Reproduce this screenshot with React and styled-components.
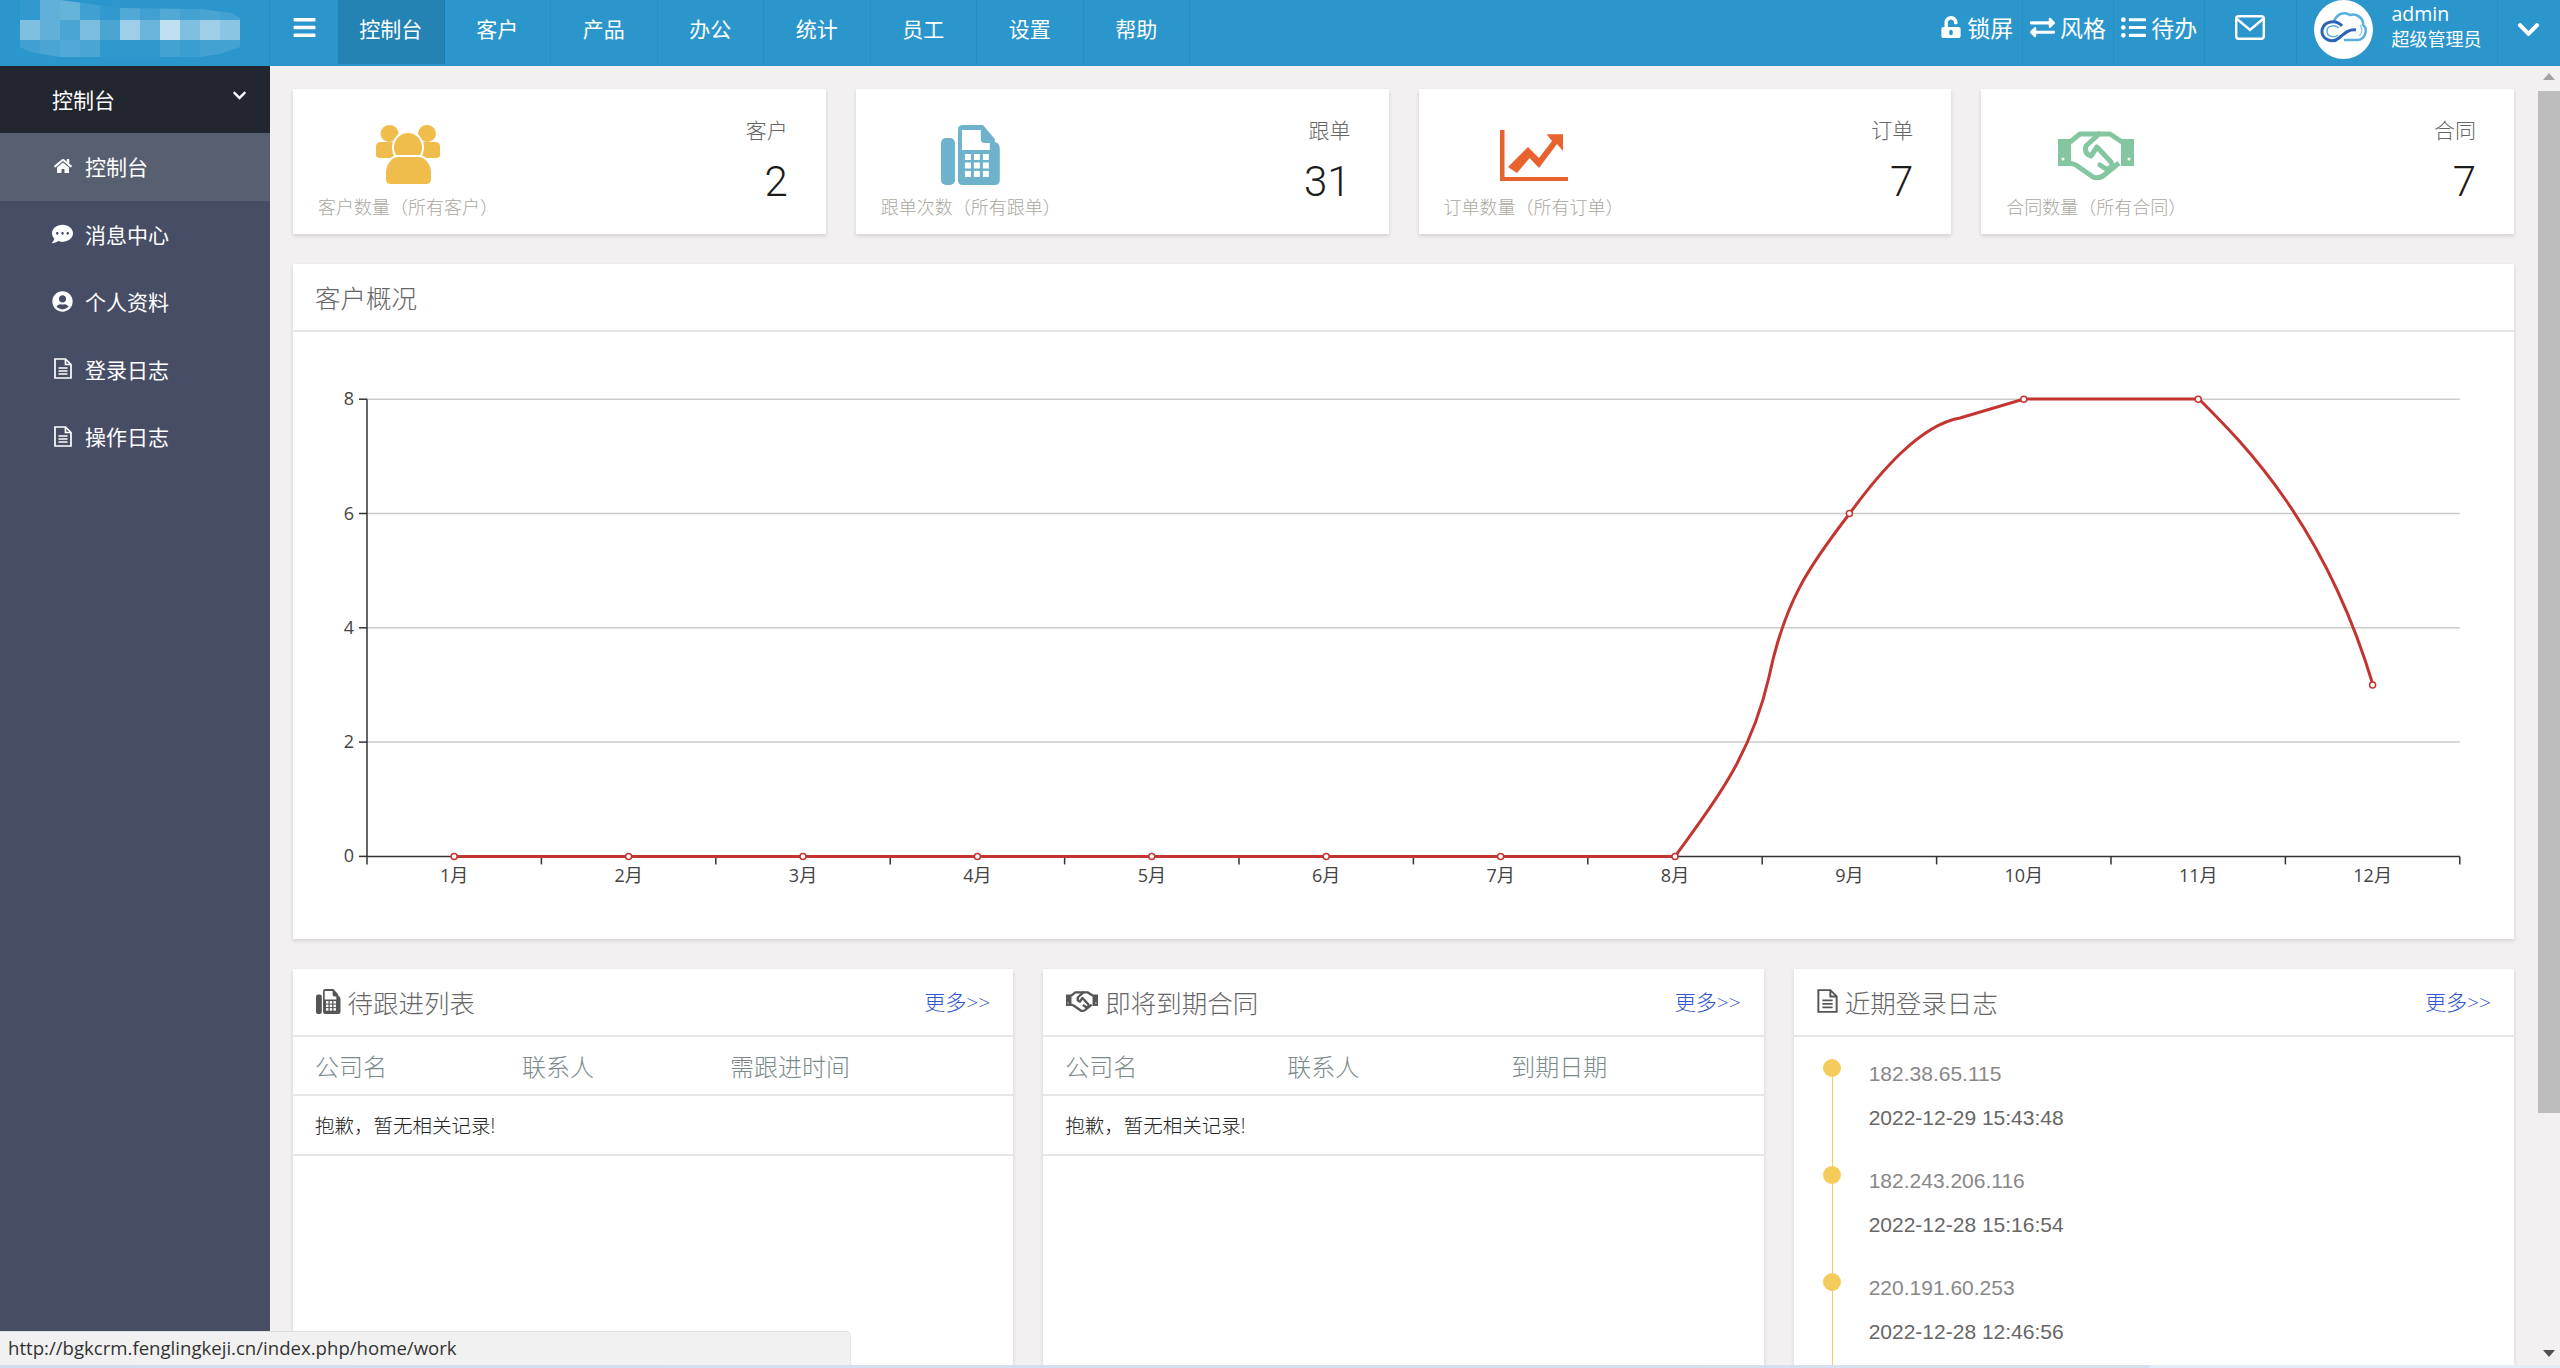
import React from 'react';
import styled, { createGlobalStyle } from 'styled-components';
import {
  FaBars,
  FaChevronDown,
  FaCommentDots,
  FaExchangeAlt,
  FaHome,
  FaListUl,
  FaUnlockAlt,
  FaUserCircle,
} from 'react-icons/fa';

const NAV = ['控制台', '客户', '产品', '办公', '统计', '员工', '设置', '帮助'];

const MOSAIC = [
  [0.03, 0.25, 0.28, 0.1, 0.03, 0.18, 0.1, 0.18, 0.12, 0.15, 0.12],
  [0.4, 0.25, 0.15, 0.38, 0.15, 0.55, 0.3, 0.7, 0.4, 0.55, 0.45],
  [0.1, 0.15, 0.18, 0.15, 0.02, 0.02, 0.02, 0.12, 0.08, 0.12, 0.12],
];

const LOGS = [
  { ip: '182.38.65.115', time: '2022-12-29 15:43:48' },
  { ip: '182.243.206.116', time: '2022-12-28 15:16:54' },
  { ip: '220.191.60.253', time: '2022-12-28 12:46:56' },
];

const X0 = 367;
const STEP = 174.4;
const Y0 = 856.4;
const YSTEP = 57.15;
const DATA = [0, 0, 0, 0, 0, 0, 0, 0, 6, 8, 8, 3];

// 折线路径，坐标和整页一致
const CURVE =
  'M1675 856.4 C1710 808 1750 760 1769 677 C1785 600 1810 565 1850 513 ' +
  'C1880 472 1920 425 1960 418 L2024 399 H2199 C2245 445 2325 525 2373 685';

function LogoMosaic() {
  return (
    <svg width="270" height="66" viewBox="0 0 270 66">
      <clipPath id="logo-clip">
        <path d="M20 0H60L120 8L200 9L232 13L240 18V47L220 54L200 57H60L30 52L20 47Z" />
      </clipPath>
      <g clipPath="url(#logo-clip)">
        {MOSAIC.map((row, r) =>
          row.map((o, c) => (
            <rect key={`${r}-${c}`} x={20 + c * 20} y={r * 20} width="20" height="20" fill="#fff" opacity={o} />
          ))
        )}
      </g>
    </svg>
  );
}

function CloudLogo() {
  return (
    <svg width="59" height="59" viewBox="0 0 59 59">
      <circle cx="29.5" cy="29.5" r="29.5" fill="#fff" />
      <path d="M20 22C22 14 30 11 36 15C42 13 50 18 49 25C54 28 52 39 44 40H30" fill="none" stroke="#57afe0" strokeWidth="2.5" />
      <path d="M28 26C22 19 10 21 8 30C7 39 18 44 25 38C31 33 35 29 42 30" fill="none" stroke="#2b63b5" strokeWidth="3" />
      <path d="M25 28C20 24 13 26 13 31C13 37 20 38 24 35" fill="none" stroke="#57afe0" strokeWidth="1.5" />
      <path d="M46 25C49 29 48 34 45 36" fill="none" stroke="#9acbe8" strokeWidth="1.5" />
    </svg>
  );
}

function MailGlyph() {
  return (
    <svg width="30" height="25" viewBox="0 0 30 25" fill="none" stroke="#fff" strokeWidth="2.4">
      <rect x="1.2" y="1.2" width="27.6" height="22.6" rx="2.5" />
      <path d="M2 4L15 15L28 4" />
    </svg>
  );
}

function FileIcon({ width = 18, height = 21, color = 'currentColor' }) {
  return (
    <svg width={width} height={height} viewBox="0 0 18 21" fill="none" stroke={color} strokeWidth="1.7">
      <path d="M1 1H11.5L17 6.5V20H1Z" />
      <path d="M11.5 1V6.5H17" />
      <path d="M4.5 10H13.5M4.5 13H13.5M4.5 16H13.5" strokeWidth="1.5" />
    </svg>
  );
}

function UsersIcon() {
  return (
    <svg width="64" height="60" viewBox="0 0 64 60" fill="#f0bc4b">
      <ellipse cx="13.5" cy="8.5" rx="9" ry="8.5" />
      <ellipse cx="51" cy="8.5" rx="9" ry="8.5" />
      <path d="M0 22Q0 17 5 17H59Q64 17 64 22V30Q64 33 60 33H4Q0 33 0 30Z" />
      <ellipse cx="32" cy="22.5" rx="15" ry="15.5" stroke="#fff" strokeWidth="2" />
      <path d="M9 48C9 38 16 31 22 31H42C49 31 56 38 56 48V54Q56 60 50 60H15Q9 60 9 54Z" stroke="#fff" strokeWidth="2" />
    </svg>
  );
}

function FaxIcon({ size = 60 }) {
  return (
    <svg width={size * 0.98} height={size} viewBox="0 0 59 60" fill="currentColor">
      <rect x="0" y="13" width="14" height="47" rx="5" />
      <path d="M17 5Q17 0 22 0H42L54 14V17Q59 18 59 24V55Q59 60 54 60H22Q17 60 17 55Z" />
      <path d="M21 5H40V14Q40 18 44 18H49V25H21Z" fill="#fff" />
      {[0, 1, 2].map((r) =>
        [0, 1, 2].map((c) => (
          <rect key={`${r}-${c}`} x={24 + c * 9} y={29 + r * 8.5} width="6" height="6" fill="#fff" />
        ))
      )}
    </svg>
  );
}

function ChartIcon() {
  return (
    <svg width="68" height="51" viewBox="0 0 68 51" fill="#e8622e">
      <path d="M0 0H4.5V47H68V51H0Z" />
      <path d="M46.6 4.3H63V21L57 14L39 38L29.6 28L17 43L8 37L28 17L39 28L52 11Z" />
    </svg>
  );
}

function HandshakeIcon({ width = 76, height = 49, stroke = 5 }) {
  return (
    <svg width={width} height={height} viewBox="0 0 76 49" fill="none" stroke="currentColor" strokeWidth={stroke}>
      <path d="M0 8H13V35H0Z" fill="currentColor" stroke="none" />
      <path d="M63 8H76V35H63Z" fill="currentColor" stroke="none" />
      <path d="M12 11L22 3H52L64 11" strokeLinejoin="round" />
      <path d="M12 32L18 34L35 46Q40 48 45 45L61 32" strokeLinejoin="round" />
      <path d="M41 3L28 15Q26 23 33 25L39 16L53 31Q56 37 48 38L42 34" strokeLinejoin="round" strokeLinecap="round" />
      <circle cx="5" cy="28" r="1.5" fill="#fff" stroke="none" />
      <circle cx="71" cy="28" r="1.5" fill="#fff" stroke="none" />
    </svg>
  );
}

const MENU = [
  { label: '控制台', icon: <FaHome />, size: 18, active: true },
  { label: '消息中心', icon: <FaCommentDots />, size: 22 },
  { label: '个人资料', icon: <FaUserCircle />, size: 21 },
  { label: '登录日志', icon: <FileIcon /> },
  { label: '操作日志', icon: <FileIcon /> },
];

function CustomerChart() {
  const months = Array.from({ length: 12 }, (_, i) => i);
  return (
    <svg width="2221" height="607" viewBox="293 332 2221 607">
      <g stroke="#ccc" strokeWidth="1.5">
        {[1, 2, 3, 4].map((n) => (
          <line key={n} x1={X0} x2={X0 + STEP * 12} y1={Y0 - n * 2 * YSTEP} y2={Y0 - n * 2 * YSTEP} />
        ))}
      </g>
      <g stroke="#333" strokeWidth="1.5">
        <line x1={X0} x2={X0} y1={Y0 - 8 * YSTEP} y2={Y0} />
        <line x1={X0} x2={X0 + STEP * 12} y1={Y0} y2={Y0} />
        {[0, 1, 2, 3, 4].map((n) => (
          <line key={n} x1={X0 - 8} x2={X0} y1={Y0 - n * 2 * YSTEP} y2={Y0 - n * 2 * YSTEP} />
        ))}
        {Array.from({ length: 13 }, (_, i) => (
          <line key={i} x1={X0 + STEP * i} x2={X0 + STEP * i} y1={Y0} y2={Y0 + 8} />
        ))}
      </g>
      <ChartText>
        {[0, 1, 2, 3, 4].map((n) => (
          <text key={n} x={X0 - 13} y={Y0 - n * 2 * YSTEP + 6} textAnchor="end">
            {n * 2}
          </text>
        ))}
        {months.map((m) => (
          <text key={m} x={X0 + STEP * (m + 0.5)} y={Y0 + 26} textAnchor="middle">
            {m + 1}月
          </text>
        ))}
      </ChartText>
      <g fill="none" stroke="#c23531" strokeWidth="3">
        <line x1={X0 + STEP / 2} x2="1675" y1={Y0} y2={Y0} />
        <path d={CURVE} />
      </g>
      <g fill="#fff" stroke="#c23531" strokeWidth="1.5">
        {DATA.map((v, i) => (
          <circle key={i} cx={X0 + STEP * (i + 0.5)} cy={Y0 - v * YSTEP} r="3" />
        ))}
      </g>
    </svg>
  );
}

function App() {
  return (
    <Page>
      <GlobalStyle />
      <Header>
        <LogoBox>
          <LogoMosaic />
        </LogoBox>
        <Toggle>
          <FaBars />
        </Toggle>
        {NAV.map((item, i) => (
          <NavTab key={item} $active={i === 0}>
            {item}
          </NavTab>
        ))}
        <Tools>
          <ToolItem $iconSize={22}>
            <FaUnlockAlt />
            锁屏
          </ToolItem>
          <ToolItem $iconSize={25}>
            <FaExchangeAlt />
            风格
          </ToolItem>
          <ToolItem $iconSize={25}>
            <FaListUl />
            待办
          </ToolItem>
          <ToolItem>
            <MailGlyph />
          </ToolItem>
          <UserBox>
            <CloudLogo />
            <UserText>
              <UserName>admin</UserName>
              <UserRole>超级管理员</UserRole>
            </UserText>
          </UserBox>
          <UserCaret>
            <FaChevronDown />
          </UserCaret>
        </Tools>
      </Header>

      <Body>
        <Sidebar>
          <SideTitle>
            控制台
            <FaChevronDown />
          </SideTitle>
          {MENU.map((item) => (
            <SideItem key={item.label} $active={item.active}>
              <SideIcon $size={item.size}>{item.icon}</SideIcon>
              {item.label}
            </SideItem>
          ))}
        </Sidebar>

        <Main>
          <StatRow>
            <StatCard>
              <StatLeft>
                <StatIcon>
                  <UsersIcon />
                </StatIcon>
                <StatLabel>客户数量（所有客户）</StatLabel>
              </StatLeft>
              <StatRight>
                <StatName>客户</StatName>
                <StatValue>2</StatValue>
              </StatRight>
            </StatCard>
            <StatCard>
              <StatLeft>
                <StatIcon $color="#6fb2cc">
                  <FaxIcon />
                </StatIcon>
                <StatLabel>跟单次数（所有跟单）</StatLabel>
              </StatLeft>
              <StatRight>
                <StatName>跟单</StatName>
                <StatValue>31</StatValue>
              </StatRight>
            </StatCard>
            <StatCard>
              <StatLeft>
                <StatIcon>
                  <ChartIcon />
                </StatIcon>
                <StatLabel>订单数量（所有订单）</StatLabel>
              </StatLeft>
              <StatRight>
                <StatName>订单</StatName>
                <StatValue>7</StatValue>
              </StatRight>
            </StatCard>
            <StatCard>
              <StatLeft>
                <StatIcon $color="#84c6a0">
                  <HandshakeIcon />
                </StatIcon>
                <StatLabel>合同数量（所有合同）</StatLabel>
              </StatLeft>
              <StatRight>
                <StatName>合同</StatName>
                <StatValue>7</StatValue>
              </StatRight>
            </StatCard>
          </StatRow>

          <ChartCard>
            <PanelHead>
              <PanelTitle>客户概况</PanelTitle>
            </PanelHead>
            <CustomerChart />
          </ChartCard>

          <PanelRow>
            <Panel>
              <PanelHead>
                <PanelTitle>
                  <TitleIcon>
                    <FaxIcon size={25} />
                  </TitleIcon>
                  待跟进列表
                </PanelTitle>
                <MoreLink>更多&gt;&gt;</MoreLink>
              </PanelHead>
              <TableHead $cols="207px 208px 1fr">
                <span>公司名</span>
                <span>联系人</span>
                <span>需跟进时间</span>
              </TableHead>
              <EmptyRow>抱歉，暂无相关记录!</EmptyRow>
            </Panel>
            <Panel>
              <PanelHead>
                <PanelTitle>
                  <TitleIcon>
                    <HandshakeIcon width={32} height={23} stroke={5.5} />
                  </TitleIcon>
                  即将到期合同
                </PanelTitle>
                <MoreLink>更多&gt;&gt;</MoreLink>
              </PanelHead>
              <TableHead $cols="222px 224px 1fr">
                <span>公司名</span>
                <span>联系人</span>
                <span>到期日期</span>
              </TableHead>
              <EmptyRow>抱歉，暂无相关记录!</EmptyRow>
            </Panel>
            <Panel>
              <PanelHead>
                <PanelTitle>
                  <TitleIcon>
                    <FileIcon width={21} height={24} />
                  </TitleIcon>
                  近期登录日志
                </PanelTitle>
                <MoreLink>更多&gt;&gt;</MoreLink>
              </PanelHead>
              <Timeline>
                {LOGS.map((log) => (
                  <TimelineItem key={log.time}>
                    <TimelineDot />
                    <LogIp>{log.ip}</LogIp>
                    <LogTime>{log.time}</LogTime>
                  </TimelineItem>
                ))}
              </Timeline>
            </Panel>
          </PanelRow>
        </Main>

        <Scrollbar>
          <ArrowUp />
          <Thumb />
          <ArrowDown />
        </Scrollbar>

        <StatusBar>http://bgkcrm.fenglingkeji.cn/index.php/home/work</StatusBar>
      </Body>
      <BottomStrip />
    </Page>
  );
}

export default App;

const GlobalStyle = createGlobalStyle`
  html, body {
    margin: 0;
    padding: 0;
    overflow: hidden;
    background: #f2f0f1;
  }
  * {
    box-sizing: border-box;
  }
`;

const Page = styled.div`
  display: flex;
  flex-direction: column;
  width: 2560px;
  height: 1368px;
  overflow: hidden;
  font-family: 'Open Sans', 'Noto Sans CJK SC', sans-serif;
  font-weight: 300;
  color: #666;
`;

const Header = styled.header`
  display: flex;
  flex: none;
  height: 66px;
  background: #2b96cc;
  color: #fff;
`;

const LogoBox = styled.div`
  flex: none;
  width: 270px;
  height: 66px;
  border-right: 1px solid rgba(0, 0, 0, 0.05);

  svg {
    display: block;
  }
`;

const Toggle = styled.div`
  display: flex;
  flex: none;
  align-items: center;
  justify-content: center;
  width: 68px;
  padding-bottom: 12px;
  font-size: 25px;
`;

const NavTab = styled.div`
  display: flex;
  flex: none;
  align-items: center;
  justify-content: center;
  width: 106.5px;
  height: ${({ $active }) => ($active ? '64px' : '66px')};
  padding-bottom: ${({ $active }) => ($active ? '8px' : '10px')};
  font-size: 21px;
  font-weight: 400;
  border-right: 1px solid rgba(0, 0, 0, 0.05);
  background: ${({ $active }) => ($active ? '#2483b3' : 'transparent')};
`;

const Tools = styled.div`
  display: flex;
  margin-left: auto;
`;

const ToolItem = styled.div`
  display: flex;
  align-items: center;
  justify-content: center;
  gap: 5px;
  width: 91.2px;
  padding-bottom: 12px;
  font-size: 23px;
  font-weight: 400;
  border-right: 1px solid rgba(0, 0, 0, 0.05);

  svg {
    flex: none;
    font-size: ${({ $iconSize }) => $iconSize || 20}px;
  }
`;

const UserBox = styled.div`
  display: flex;
  gap: 19px;
  width: 201px;
  padding-left: 17px;
  border-right: 1px solid rgba(0, 0, 0, 0.05);
`;

const UserText = styled.div`
  display: flex;
  flex-direction: column;
  padding-top: 1px;
  font-weight: 400;
`;

const UserName = styled.div`
  font-size: 19.5px;
  line-height: 26px;
`;

const UserRole = styled.div`
  font-size: 18px;
  line-height: 24px;
`;

const UserCaret = styled.div`
  display: flex;
  align-items: center;
  justify-content: center;
  width: 62.5px;
  padding-bottom: 8px;
  font-size: 25px;
`;

const Body = styled.div`
  position: relative;
  display: flex;
  flex: 1;
  min-height: 0;
  overflow: hidden;
`;

const Sidebar = styled.nav`
  flex: none;
  width: 270px;
  background: #484d66;
  color: #fff;
  font-weight: 400;
`;

const SideTitle = styled.div`
  display: flex;
  align-items: center;
  justify-content: space-between;
  height: 67px;
  padding: 0 23px 2px 52px;
  background: #22262e;
  font-size: 21px;

  svg {
    font-size: 15px;
    margin-bottom: 6px;
  }
`;

const SideItem = styled.div`
  display: flex;
  align-items: center;
  height: 67.5px;
  padding: 0 0 1px 52px;
  font-size: 21px;
  background: ${({ $active }) => ($active ? '#585f70' : 'transparent')};
`;

const SideIcon = styled.span`
  display: flex;
  justify-content: center;
  width: 21px;
  margin-right: 12px;
  font-size: ${({ $size }) => $size || 20}px;
`;

const Main = styled.main`
  flex: 1;
  min-width: 0;
  padding: 23px 24px 0 23px;
`;

const StatRow = styled.div`
  display: grid;
  grid-template-columns: repeat(4, 1fr);
  gap: 30px;
`;

const StatCard = styled.section`
  display: flex;
  justify-content: space-between;
  height: 145px;
  background: #fff;
  box-shadow: 0 2px 4px rgba(60, 50, 30, 0.16);
`;

const StatLeft = styled.div`
  width: 230px;
  padding: 36px 0 0 25px;
`;

const StatIcon = styled.div`
  display: flex;
  align-items: center;
  justify-content: center;
  width: 180px;
  height: 60px;
  color: ${({ $color }) => $color || 'inherit'};
`;

const StatLabel = styled.div`
  margin-top: 10px;
  font-size: 18px;
  line-height: 24px;
  color: #aaa8a0;
  white-space: nowrap;
`;

const StatRight = styled.div`
  padding: 26px 38px 0 0;
  text-align: right;
`;

const StatName = styled.div`
  font-size: 21px;
  line-height: 30px;
  color: #666;
`;

const StatValue = styled.div`
  margin-top: 12px;
  font-family: Roboto, sans-serif;
  font-size: 42px;
  font-weight: 300;
  line-height: 50px;
  color: #1c1c1c;
`;

const ChartCard = styled.section`
  height: 675px;
  margin-top: 30px;
  background: #fff;
  box-shadow: 0 2px 4px rgba(60, 50, 30, 0.16);

  svg {
    display: block;
  }
`;

const ChartText = styled.g`
  font-family: 'Open Sans', 'Noto Sans CJK SC', sans-serif;
  font-size: 18px;
  font-weight: 400;
  fill: #444;
`;

const PanelRow = styled.div`
  display: grid;
  grid-template-columns: repeat(3, 1fr);
  gap: 30px;
  margin-top: 30px;
`;

const Panel = styled.section`
  height: 520px;
  background: #fff;
  box-shadow: 0 2px 4px rgba(60, 50, 30, 0.16);
`;

const PanelHead = styled.div`
  display: flex;
  align-items: center;
  justify-content: space-between;
  height: 68px;
  padding: 0 23px 2px 22px;
  border-bottom: 2px solid #e6e6e6;
`;

const PanelTitle = styled.h3`
  display: flex;
  align-items: center;
  margin: 0;
  font-size: 25.5px;
  font-weight: 300;
  color: #666;
`;

const TitleIcon = styled.span`
  display: flex;
  margin: 0 7px 0 1px;
  color: #555;
`;

const MoreLink = styled.a`
  font-size: 21px;
  font-weight: 300;
  color: #2f55cc;
`;

const TableHead = styled.div`
  display: grid;
  grid-template-columns: ${({ $cols }) => $cols};
  align-items: center;
  height: 59px;
  padding-left: 22px;
  border-bottom: 2px solid #e6e6e6;
  font-size: 24px;
  color: #7b8a8b;
`;

const EmptyRow = styled.div`
  display: flex;
  align-items: center;
  height: 60px;
  padding: 0 0 2px 22px;
  border-bottom: 2px solid #e6e6e6;
  font-size: 19.5px;
  font-weight: 300;
  color: #222;
`;

const Timeline = styled.div`
  padding: 22px 0 0 38px;
`;

const TimelineItem = styled.div`
  position: relative;
  height: 107px;
  padding-left: 36px;
  border-left: 1.5px solid #f5cb5c;
`;

const TimelineDot = styled.span`
  position: absolute;
  top: 0;
  left: -10px;
  width: 18px;
  height: 18px;
  border-radius: 50%;
  background: #f5cb5c;
`;

const LogIp = styled.div`
  font-family: 'Liberation Sans', sans-serif;
  font-size: 21px;
  font-weight: 400;
  line-height: 30px;
  color: #888;
`;

const LogTime = styled.div`
  margin-top: 14px;
  font-family: 'Liberation Sans', sans-serif;
  font-size: 21px;
  font-weight: 400;
  line-height: 30px;
  color: #666;
`;

const Scrollbar = styled.div`
  display: flex;
  flex: none;
  flex-direction: column;
  align-items: center;
  width: 22px;
`;

const ArrowUp = styled.div`
  width: 0;
  height: 0;
  margin: 7px 0 11px;
  border-left: 6px solid transparent;
  border-right: 6px solid transparent;
  border-bottom: 7px solid #a3a3a3;
`;

const Thumb = styled.div`
  width: 22px;
  height: 1022px;
  background: #bdbdbd;
`;

const ArrowDown = styled.div`
  width: 0;
  height: 0;
  margin-top: auto;
  margin-bottom: 8px;
  border-left: 6px solid transparent;
  border-right: 6px solid transparent;
  border-top: 7px solid #505050;
`;

const StatusBar = styled.div`
  position: absolute;
  left: 0;
  bottom: 0;
  width: 851px;
  height: 34px;
  padding-left: 8px;
  background: #f1f1f1;
  border-top: 1px solid #dedede;
  border-right: 1px solid #e6e6e6;
  border-top-right-radius: 5px;
  font-size: 18.6px;
  font-weight: 400;
  line-height: 32px;
  color: #333;
`;

const BottomStrip = styled.div`
  flex: none;
  height: 3px;
  background: linear-gradient(90deg, #d2def0 0%, #d6e0f0 84%, #e4ecf6 84%, #e4ecf6 100%);
`;
